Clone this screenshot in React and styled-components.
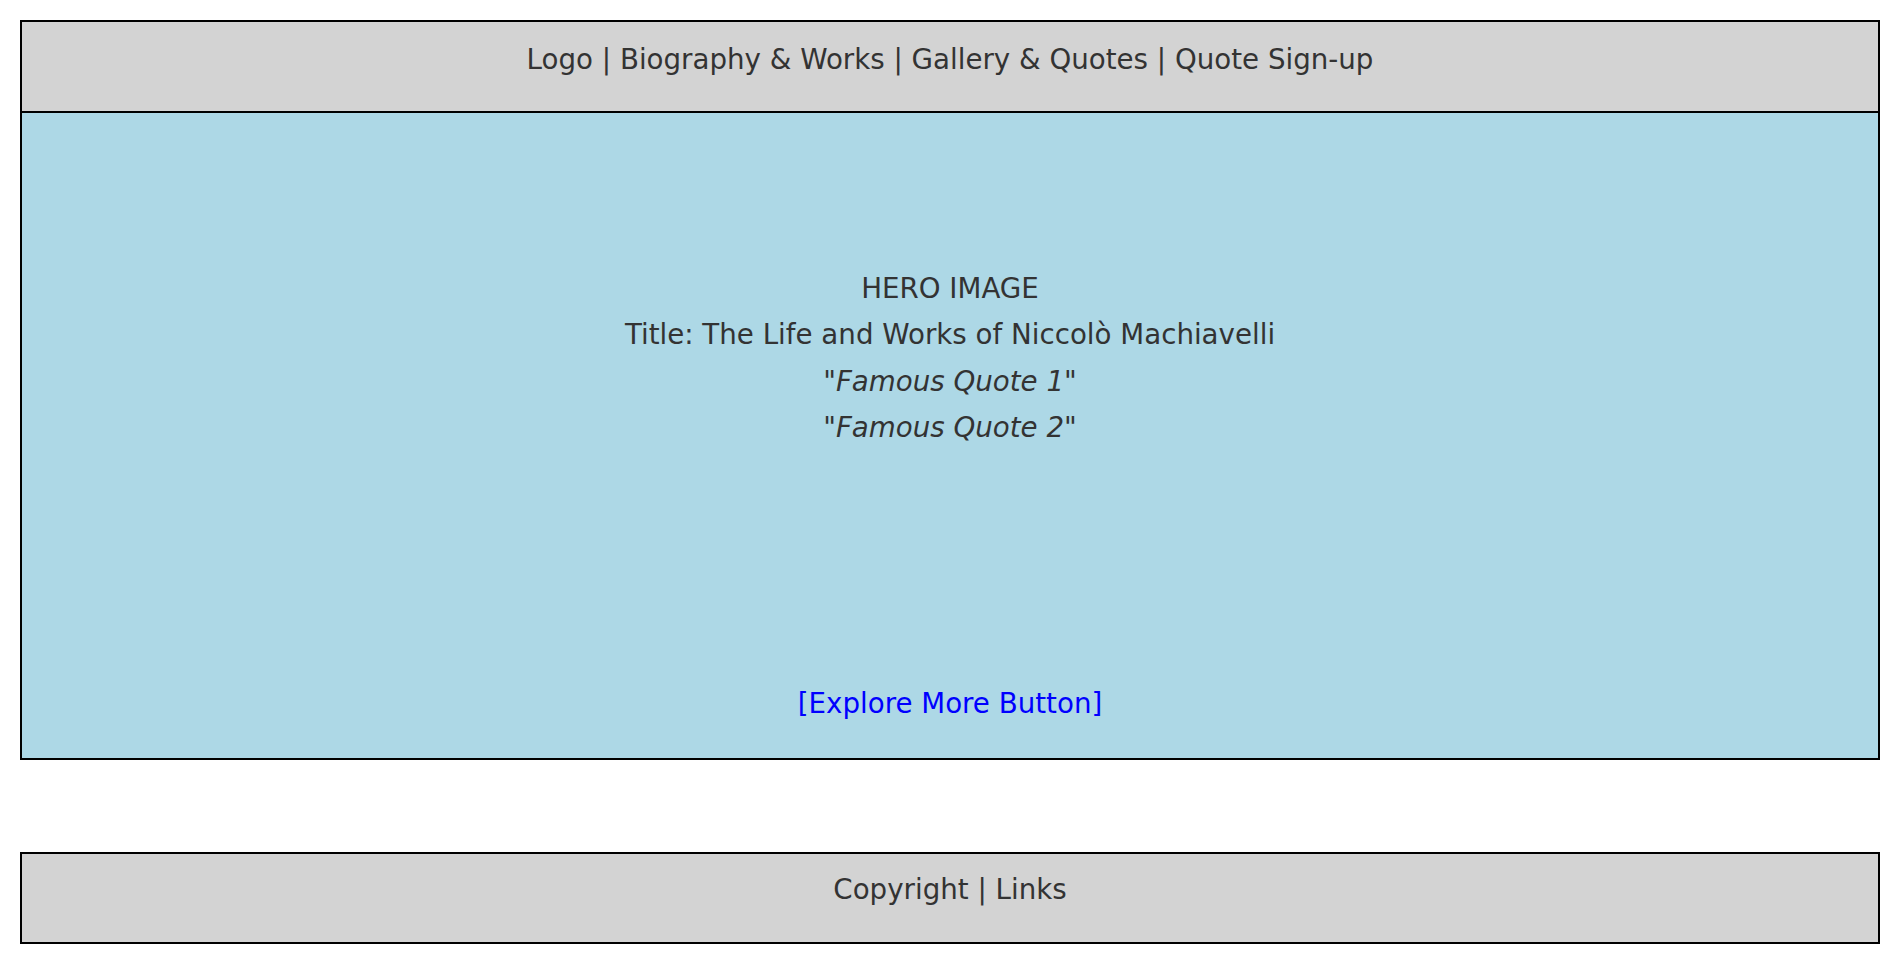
import styled, { createGlobalStyle } from "styled-components";

const GlobalStyle = createGlobalStyle`
  * {
    box-sizing: border-box;
  }
  body {
    margin: 0;
    background: #ffffff;
    font-family: "DejaVu Sans", "Liberation Sans", sans-serif;
    color: #333333;
  }
`;

const Page = styled.div`
  display: flex;
  flex-direction: column;
  padding: 20px;
`;

const Bar = styled.div`
  height: ${(props) => props.height}px;
  background: #d3d3d3;
  border: 2px solid #000000;
  padding-top: ${(props) => props.top}px;
  text-align: center;
  font-size: 27.7px;
  line-height: normal;
`;

const Hero = styled.section`
  display: flex;
  flex-direction: column;
  align-items: center;
  height: 647px;
  background: #add8e6;
  border: 2px solid #000000;
  border-top: none;
  padding: 153px 0 31px;
  font-size: 27.7px;
  line-height: 46.4px;
  text-align: center;
`;

const Line = styled.div`
  em {
    font-style: italic;
  }
`;

const Explore = styled.a`
  margin-top: auto;
  color: #0000ff;
  text-decoration: none;
  cursor: pointer;
`;

const Spacer = styled.div`
  height: 92px;
`;

const App = () => {
  return (
    <>
      <GlobalStyle />
      <Page>
        <Bar height={93} top={20.5}>
          Logo | Biography &amp; Works | Gallery &amp; Quotes | Quote Sign-up
        </Bar>
        <Hero>
          <Line>HERO IMAGE</Line>
          <Line>Title: The Life and Works of Niccolò Machiavelli</Line>
          <Line>
            "<em>Famous Quote 1</em>"
          </Line>
          <Line>
            "<em>Famous Quote 2</em>"
          </Line>
          <Explore>[Explore More Button]</Explore>
        </Hero>
        <Spacer />
        <Bar height={92} top={19}>
          Copyright | Links
        </Bar>
      </Page>
    </>
  );
};

export default App;
